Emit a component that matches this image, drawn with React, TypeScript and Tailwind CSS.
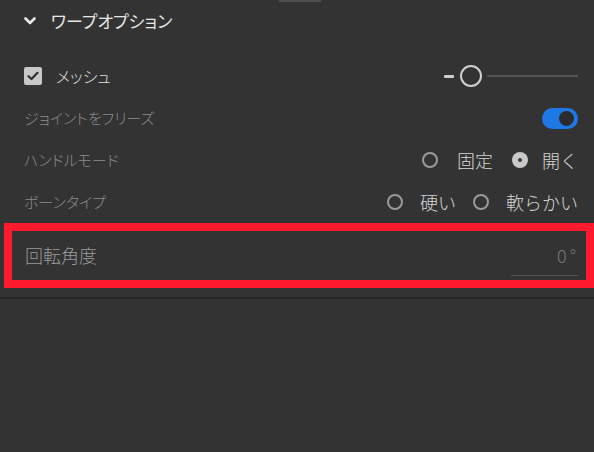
import type { ReactNode } from "react";

const jp = "font-['Noto_Sans_CJK_JP','Noto_Sans',sans-serif] font-light";
const palt = "[font-feature-settings:'palt']";

function Radio({ checked = false }: { checked?: boolean }) {
  if (checked) {
    return (
      <span className="flex w-[16px] h-[16px] rounded-full bg-[#c9c9c9] items-center justify-center">
        <span className="w-[4px] h-[4px] rounded-full bg-[#3a3a3a]" />
      </span>
    );
  }
  return <span className="w-[16px] h-[16px] rounded-full border-2 border-[#9a9a9a]" />;
}

function Row({ label, dim = false, children }: { label: ReactNode; dim?: boolean; children?: ReactNode }) {
  return (
    <div className="flex h-[42px] items-center justify-between pl-[24px] pr-[16px]">
      <div className={"flex items-center " + palt + " " + (dim ? "text-[15px] text-[#8b8b8b]" : "text-[16px] text-[#dedede]")}>
        {label}
      </div>
      <div className="flex items-center">{children}</div>
    </div>
  );
}

export default function App() {
  return (
    <div className={"w-[594px] h-[452px] bg-[#333333] overflow-hidden " + jp}>
      <div className="ml-[279px] w-[42px] h-[2px] bg-[#4e4e4e]" />

      <div className="flex h-[38px] items-center pl-[24px]">
        <svg width="12" height="8" viewBox="0 0 12 8" className="shrink-0">
          <polyline points="1.5,1.5 6,6 10.5,1.5" fill="none" stroke="#e8e8e8" strokeWidth="2.6" strokeLinecap="round" strokeLinejoin="round" />
        </svg>
        <span className={"ml-[15px] text-[17px] text-[#e6e6e6] font-normal " + palt}>ワープオプション</span>
      </div>

      <div className="mt-[15px]">
        <Row
          label={
            <>
              <span className="flex w-[18px] h-[18px] rounded-[2px] bg-[#c8c8c8] items-center justify-center">
                <svg width="12" height="10" viewBox="0 0 12 10">
                  <polyline points="1.5,5.2 4.5,8 10.5,1.8" fill="none" stroke="#2e2e2e" strokeWidth="2.2" strokeLinecap="round" strokeLinejoin="round" />
                </svg>
              </span>
              <span className="ml-[14px]">メッシュ</span>
            </>
          }
        >
          <span className="w-[10px] h-[3px] bg-[#cfcfcf] rounded-[1px]" />
          <span className="ml-[6px] w-[22px] h-[22px] rounded-full border-[2.5px] border-[#d0d0d0]" />
          <span className="ml-[5px] w-[91px] h-[2px] bg-[#555555]" />
        </Row>

        <Row label="ジョイントをフリーズ" dim>
          <span className="flex w-[36px] h-[21px] rounded-full bg-[#1e78e6] items-center justify-end pr-[4px]">
            <span className="w-[15px] h-[15px] rounded-full bg-[#2b2b2b]" />
          </span>
        </Row>

        <Row label="ハンドルモード" dim>
          <div className="flex items-center text-[18px] text-[#d6d6d6]">
            <Radio />
            <span className="ml-[19px]">固定</span>
            <span className="ml-[19px] flex"><Radio checked /></span>
            <span className="ml-[14px]">開く</span>
          </div>
        </Row>

        <Row label="ボーンタイプ" dim>
          <div className="flex items-center text-[18px] text-[#d6d6d6]">
            <Radio />
            <span className="ml-[17px]">硬い</span>
            <span className="ml-[17px] flex"><Radio /></span>
            <span className="ml-[17px]">軟らかい</span>
          </div>
        </Row>

        <div className="ml-[4px] h-[65px] border-[8px] border-[#ff1a2e] flex items-center justify-between pl-[13px] pr-[8px]">
          <span className="text-[18px] text-[#9a9a9a]">回転角度</span>
          <div className="flex w-[67px] h-[40px] items-center justify-end pr-[2px] border-b border-[#555555] text-[18px] text-[#7a7a7a]">
            <span>0</span>
            <span className="ml-[3px]">°</span>
          </div>
        </div>
      </div>

      <div className="mt-[9px] h-[2px] bg-[#262626]" />
    </div>
  );
}
